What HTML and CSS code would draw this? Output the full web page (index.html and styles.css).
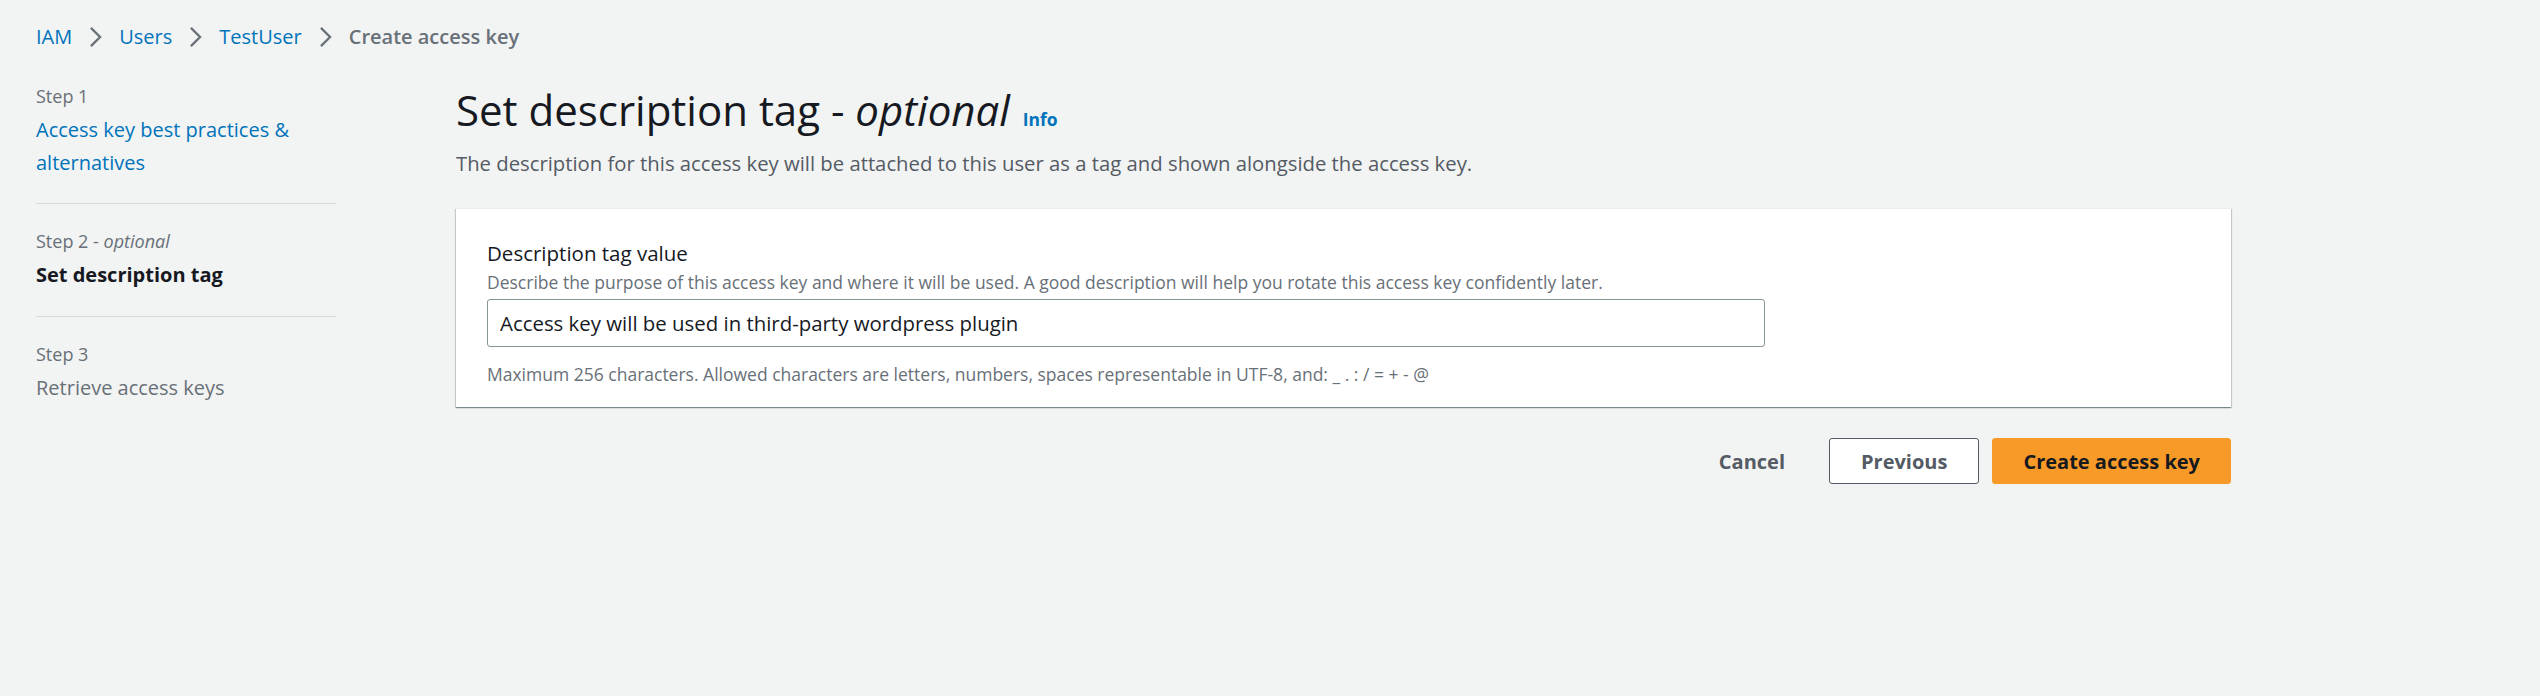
FILE: index.html
```html
<!DOCTYPE html>
<html lang="en">
<head>
    <meta charset="UTF-8">
    <meta name="viewport" content="width=device-width, initial-scale=1.0">
    <title>Create access key</title>
    <link rel="stylesheet" href="styles.css">
</head>
<body>

<nav class="breadcrumbs">
    <a href="#">IAM</a>
    <svg class="chevron" viewBox="0 0 14 24"><polyline points="2,2 12,12 2,22"/></svg>
    <a href="#">Users</a>
    <svg class="chevron" viewBox="0 0 14 24"><polyline points="2,2 12,12 2,22"/></svg>
    <a href="#">TestUser</a>
    <svg class="chevron" viewBox="0 0 14 24"><polyline points="2,2 12,12 2,22"/></svg>
    <span class="current">Create access key</span>
</nav>

<div class="layout">
    <ul class="steps">
        <li class="step">
            <div class="step-label">Step 1</div>
            <a class="step-title link" href="#">Access key best practices &amp;<br>alternatives</a>
        </li>
        <li class="step">
            <div class="step-label">Step 2 - <i>optional</i></div>
            <div class="step-title active">Set description tag</div>
        </li>
        <li class="step">
            <div class="step-label">Step 3</div>
            <div class="step-title disabled">Retrieve access keys</div>
        </li>
    </ul>

    <main class="content">
        <h1>Set description tag - <i>optional</i> <a class="info" href="#">Info</a></h1>
        <p class="subtitle">The description for this access key will be attached to this user as a tag and shown alongside the access key.</p>

        <form class="card" id="tagForm">
            <label for="tag">Description tag value</label>
            <div class="hint">Describe the purpose of this access key and where it will be used. A good description will help you rotate this access key confidently later.</div>
            <input type="text" id="tag" name="tag" value="Access key will be used in third-party wordpress plugin">
            <div class="constraint">Maximum 256 characters. Allowed characters are letters, numbers, spaces representable in UTF-8, and: _ . : / = + - @</div>
        </form>

        <div class="actions">
            <button type="button" class="btn-link">Cancel</button>
            <button type="button" class="btn-normal">Previous</button>
            <button type="submit" form="tagForm" class="btn-primary">Create access key</button>
        </div>
    </main>
</div>

</body>
</html>
```

FILE: styles.css
```css
body {
    font-family: "Open Sans", Lato, sans-serif;
    background-color: #f2f3f3;
    color: #16191f;
    margin: 0;
}
a {
    color: #0073bb;
    text-decoration: none;
}
.breadcrumbs {
    display: flex;
    align-items: center;
    gap: 17px;
    padding: 22px 36px 0;
    height: 30px;
    font-size: 20px;
    line-height: 30px;
}
.breadcrumbs .current {
    color: #687078;
    font-weight: 600;
}
.chevron {
    width: 13px;
    height: 22px;
    fill: none;
    stroke: #687078;
    stroke-width: 2.5;
}
.layout {
    display: flex;
    gap: 120px;
    padding: 30px 0 0 36px;
}
.steps {
    list-style: none;
    margin: 0;
    padding: 0;
    width: 300px;
}
.step {
    padding: 23px 0 25px;
    border-top: 1px solid #d5dbdb;
}
.step:first-child {
    padding: 0 0 24px;
    border-top: none;
}
.step-label {
    font-size: 18px;
    line-height: 28px;
    color: #687078;
}
.step-title {
    display: block;
    margin-top: 3px;
    font-size: 20px;
    line-height: 33px;
}
.step-title.active {
    font-weight: bold;
}
.step-title.disabled {
    color: #687078;
}
.content {
    width: 1775px;
}
h1 {
    margin: 4px 0 0;
    font-size: 42px;
    line-height: 48px;
    font-weight: normal;
}
.info {
    margin-left: 2px;
    font-size: 17.5px;
    font-weight: bold;
}
.subtitle {
    margin: 6px 0 0;
    font-size: 20.3px;
    line-height: 28px;
    color: #545b64;
}
.card {
    margin-top: 31px;
    padding: 30px 30px 21px 31px;
    background-color: white;
    border-top: 1px solid #eaeded;
    box-shadow: 0 1px 1px 0 rgba(0, 28, 36, 0.3), 1px 1px 1px 0 rgba(0, 28, 36, 0.15), -1px 1px 1px 0 rgba(0, 28, 36, 0.15);
}
label {
    display: block;
    font-size: 20.5px;
    line-height: 29px;
}
.hint {
    margin-top: 2px;
    font-size: 17.5px;
    line-height: 24px;
    color: #687078;
}
input {
    display: block;
    box-sizing: border-box;
    margin-top: 5px;
    width: 1278px;
    height: 48px;
    padding: 0 12px;
    font-family: inherit;
    font-size: 20.4px;
    color: #16191f;
    border: 1px solid #879596;
    border-radius: 3px;
}
.constraint {
    margin-top: 15px;
    font-size: 17.5px;
    line-height: 24px;
    color: #687078;
}
.actions {
    display: flex;
    justify-content: flex-end;
    gap: 13px;
    margin-top: 31px;
}
button {
    height: 46px;
    padding: 0 31px;
    font-family: inherit;
    font-size: 20px;
    font-weight: bold;
    border-radius: 3px;
    cursor: pointer;
}
.btn-link {
    background: none;
    border: none;
    color: #545b64;
}
.btn-normal {
    background-color: white;
    border: 1px solid #545b64;
    color: #545b64;
}
.btn-primary {
    padding: 0 30px;
    background-color: #f89a28;
    border: 1px solid #f89a28;
    color: #16191f;
}
```
